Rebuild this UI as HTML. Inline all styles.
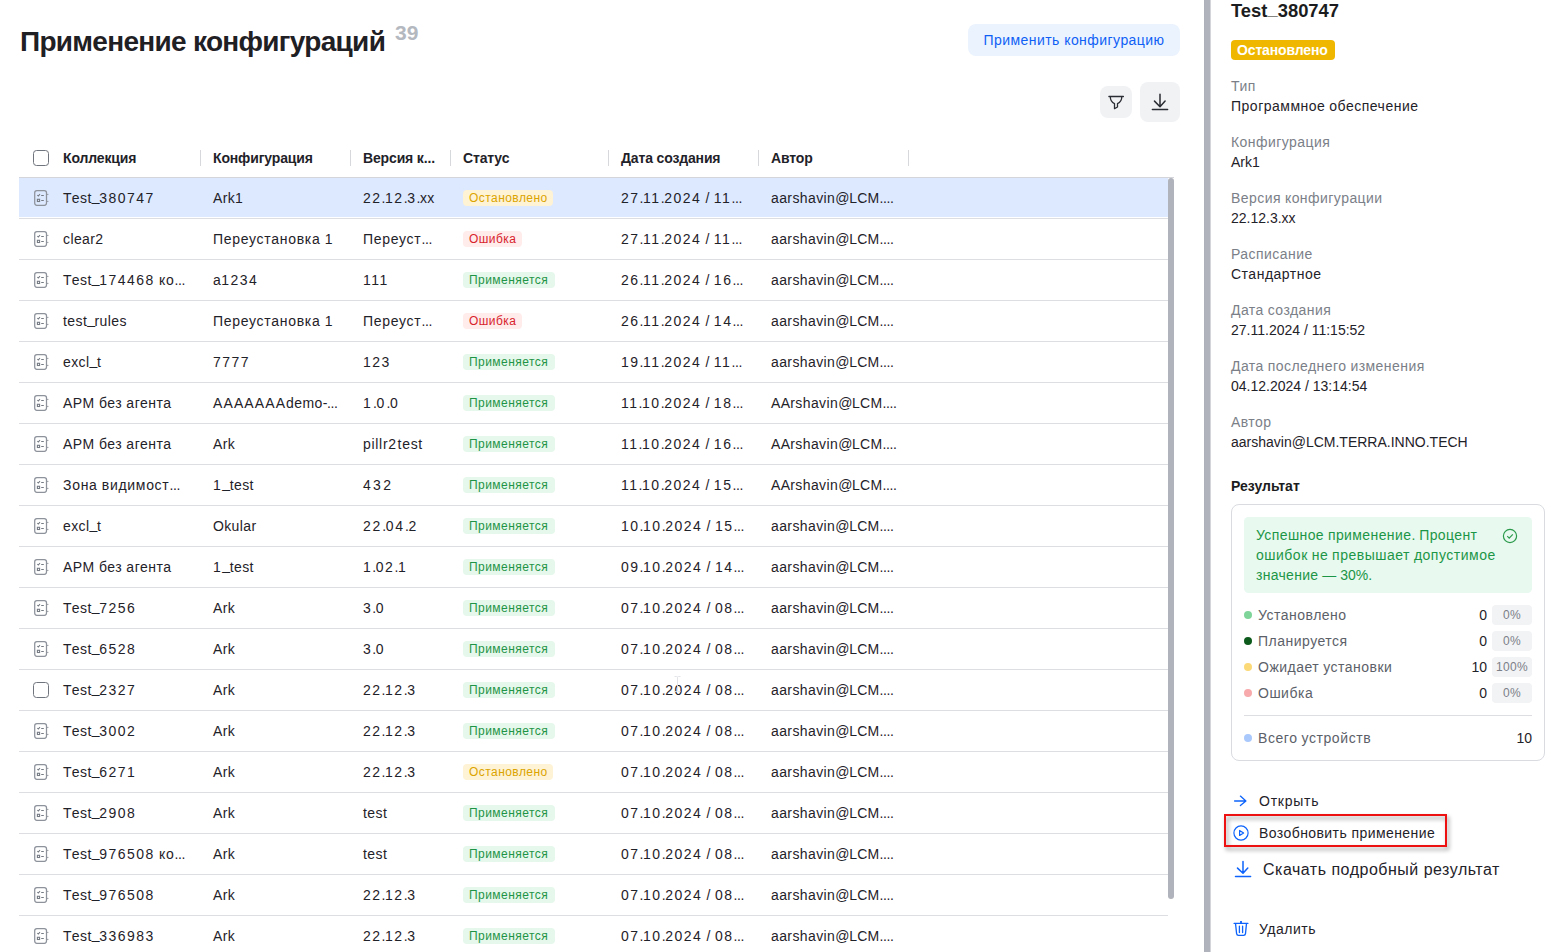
<!DOCTYPE html><html><head><meta charset="utf-8"><style>
*{box-sizing:border-box;margin:0;padding:0}
html,body{width:1558px;height:952px;overflow:hidden;background:#fff}
body{font-family:"Liberation Sans",sans-serif;color:#1f2229;position:relative}
.abs{position:absolute;white-space:nowrap}
.title{left:20px;top:24px;font-size:28px;font-weight:700;letter-spacing:-0.7px;line-height:36px;color:#1f2024}
.count{left:395px;top:22px;font-size:21px;font-weight:700;color:#b4b8bf;line-height:22px}
.btn-apply{left:968px;top:24px;width:212px;height:32px;border-radius:8px;background:#ebf3fe;color:#0f5ff5;font-size:14px;line-height:32px;text-align:center;letter-spacing:0.45px}
.ibtn{background:#f1f2f4;border-radius:8px}
.th{font-size:14px;font-weight:700;line-height:20px;top:148px;color:#1f2229;letter-spacing:-0.15px}
.sep{width:1px;height:16px;top:150px;background:#d6d8dc}
.hline{left:19px;top:177px;width:1155px;height:1px;background:#d3d5da}
.row{position:absolute;left:19px;width:1149px;height:41px}
.row .bg{position:absolute;left:0;top:0;width:1149px;height:39px;background:#dde9fe}
.row .ln{position:absolute;left:0;top:40px;width:1149px;height:1px;background:#dcdee2}
.cell{position:absolute;top:10px;font-size:14px;line-height:20px;white-space:nowrap;color:#1f2229}
.ricon{position:absolute;left:14px;top:11px}
.cb{position:absolute;left:14px;top:12px;width:16px;height:16px;border:1.3px solid #70747c;border-radius:3.5px;background:#fff}
.badge{position:absolute;left:444px;top:12px;height:16px;border-radius:4px;font-size:12px;line-height:16px;padding:0 6px;letter-spacing:0.45px;white-space:nowrap}
.st-stop{background:#fff3d5;color:#dba400;width:90px}
.st-err{background:#ffeceb;color:#d8232c;width:59px}
.st-ok{background:#e5f8eb;color:#1f9447;width:92px}
.scroll{left:1168px;top:178px;width:6px;height:721px;border-radius:3px;background:#b0b3bb}
.divider{left:1204px;top:0;width:7px;height:952px;background:linear-gradient(to right,#abaeb6 0,#b0b3bb 1px,#b0b3bb 6px,#d3d5da 6px)}
.rp-title{left:1231px;top:0px;font-size:18.4px;font-weight:700;line-height:22px;color:#1b1c20}
.rp-badge{left:1231px;top:40px;width:104px;height:20px;border-radius:4px;background:#f0b700;color:#fff;font-size:14px;font-weight:700;line-height:20px;padding-left:6px;letter-spacing:-0.15px}
.lbl{left:1231px;font-size:14px;line-height:20px;color:#7b8088}
.val{left:1231px;font-size:14px;line-height:20px;color:#1f2229}
.card{left:1231px;top:504px;width:314px;height:257px;border:1px solid #d9dbe0;border-radius:8px}
.green{left:1244px;top:517px;width:288px;height:76px;border-radius:4.5px;background:#e8f9f0}
.gtext{left:1256px;top:525px;font-size:14px;line-height:20px;color:#1c9646}
.dot{width:8px;height:8px;border-radius:50%}
.leg{left:1258px;font-size:14px;line-height:20px;color:#5c6169}
.num{font-size:14px;line-height:20px;color:#1f2229;text-align:right}
.pill{left:1492px;width:40px;height:20px;border-radius:4px;background:#f2f3f5;color:#7b8088;font-size:12px;line-height:20px;text-align:center;letter-spacing:0.3px}
.act{font-size:14px;line-height:20px;color:#1f2229}
.redbox{left:1224px;top:814px;width:223px;height:33px;border:2px solid #ee1111;filter:drop-shadow(2px 3px 2px rgba(0,0,0,0.4))}
</style></head><body>
<div class="abs title">Применение конфигураций</div>
<div class="abs count">39</div>
<div class="abs btn-apply">Применить конфигурацию</div>
<div class="abs ibtn" style="left:1100px;top:86px;width:32px;height:32px"><svg width="32" height="32" viewBox="0 0 32 32" style="position:absolute;left:0;top:0"><path d="M8.9 10.5h14.5M10.3 10.7C10.3 14.5 12 16.4 14.5 17.6V22.7L17.5 21V17.6C20 16.4 21.8 14.5 21.8 10.7" fill="none" stroke="#2a2d33" stroke-width="1.3" stroke-linecap="round" stroke-linejoin="round"/></svg></div>
<div class="abs ibtn" style="left:1140px;top:82px;width:40px;height:40px"><svg width="40" height="40" viewBox="0 0 40 40" style="position:absolute;left:0;top:0"><path d="M20 12.3v12.2M14.5 19.1l5.5 5.6 5.1-5.6M12.4 27.4h15.2" fill="none" stroke="#2a2d33" stroke-width="1.5" stroke-linecap="round" stroke-linejoin="round"/></svg></div>
<div class="abs cb" style="left:33px;top:150px"></div>
<div class="abs th" style="left:63px">Коллекция</div>
<div class="abs th" style="left:213px">Конфигурация</div>
<div class="abs th" style="left:363px">Версия к...</div>
<div class="abs th" style="left:463px">Статус</div>
<div class="abs th" style="left:621px">Дата создания</div>
<div class="abs th" style="left:771px">Автор</div>
<div class="abs sep" style="left:200px"></div>
<div class="abs sep" style="left:350px"></div>
<div class="abs sep" style="left:450px"></div>
<div class="abs sep" style="left:608px"></div>
<div class="abs sep" style="left:758px"></div>
<div class="abs sep" style="left:908px"></div>
<div class="abs hline"></div>
<div class="row" style="top:178px">
<div class="bg"></div>
<div class="ln"></div>
<svg class="ricon" width="17" height="18" viewBox="0 0 17 18"><rect x="1.7" y="1.65" width="11.8" height="14.6" rx="2.2" fill="none" stroke="#8d929b" stroke-width="1.25"/><path d="M14.1 5.4h1.3M14.1 12.4h1.3" stroke="#8d929b" stroke-width="1"/><path d="M4.3 6l1 1 1.7-1.9M8.2 6.4h2.6M8.2 11.5h2.6" fill="none" stroke="#757a83" stroke-width="1.05"/><rect x="4.4" y="10.3" width="2.2" height="2.2" fill="none" stroke="#757a83" stroke-width="1.1"/></svg>
<div class="cell" style="left:44px"><span style="letter-spacing:0.3px">T</span><span style="letter-spacing:0.4px">est</span><span style="letter-spacing:-0.4px"><span style="position:relative;top:-2px">_</span></span><span style="letter-spacing:1.5px">380747</span></div>
<div class="cell" style="left:194px"><span style="letter-spacing:0.3px">A</span><span style="letter-spacing:0.4px">rk</span><span style="letter-spacing:1.5px">1</span></div>
<div class="cell" style="left:344px"><span style="letter-spacing:1.5px">22</span><span style="letter-spacing:-0.4px">.</span><span style="letter-spacing:1.5px">12</span><span style="letter-spacing:-0.4px">.</span><span style="letter-spacing:1.5px">3</span><span style="letter-spacing:-0.4px">.</span><span style="letter-spacing:0.4px">xx</span></div>
<div class="cell" style="left:602px"><span style="letter-spacing:1.5px">27</span><span style="letter-spacing:-0.4px">.</span><span style="letter-spacing:1.5px">11</span><span style="letter-spacing:-0.4px">.</span><span style="letter-spacing:1.5px">2024</span><span style="letter-spacing:0.3px"> / </span><span style="letter-spacing:1.5px">11</span><span style="letter-spacing:-0.4px">...</span></div>
<div class="cell" style="left:752px"><span style="letter-spacing:0.4px">aarshavin</span><span style="letter-spacing:-0.4px">@</span><span style="letter-spacing:0.3px">LCM</span><span style="letter-spacing:-0.4px">....</span></div>
<div class="badge st-stop">Остановлено</div>
</div>
<div class="row" style="top:219px">
<div class="ln"></div>
<svg class="ricon" width="17" height="18" viewBox="0 0 17 18"><rect x="1.7" y="1.65" width="11.8" height="14.6" rx="2.2" fill="none" stroke="#8d929b" stroke-width="1.25"/><path d="M14.1 5.4h1.3M14.1 12.4h1.3" stroke="#8d929b" stroke-width="1"/><path d="M4.3 6l1 1 1.7-1.9M8.2 6.4h2.6M8.2 11.5h2.6" fill="none" stroke="#757a83" stroke-width="1.05"/><rect x="4.4" y="10.3" width="2.2" height="2.2" fill="none" stroke="#757a83" stroke-width="1.1"/></svg>
<div class="cell" style="left:44px"><span style="letter-spacing:0.4px">clear</span><span style="letter-spacing:1.5px">2</span></div>
<div class="cell" style="left:194px"><span style="letter-spacing:0.7px">Переустановка</span><span style="letter-spacing:0.3px"> </span><span style="letter-spacing:1.5px">1</span></div>
<div class="cell" style="left:344px"><span style="letter-spacing:0.7px">Переуст</span><span style="letter-spacing:-0.4px">...</span></div>
<div class="cell" style="left:602px"><span style="letter-spacing:1.5px">27</span><span style="letter-spacing:-0.4px">.</span><span style="letter-spacing:1.5px">11</span><span style="letter-spacing:-0.4px">.</span><span style="letter-spacing:1.5px">2024</span><span style="letter-spacing:0.3px"> / </span><span style="letter-spacing:1.5px">11</span><span style="letter-spacing:-0.4px">...</span></div>
<div class="cell" style="left:752px"><span style="letter-spacing:0.4px">aarshavin</span><span style="letter-spacing:-0.4px">@</span><span style="letter-spacing:0.3px">LCM</span><span style="letter-spacing:-0.4px">....</span></div>
<div class="badge st-err">Ошибка</div>
</div>
<div class="row" style="top:260px">
<div class="ln"></div>
<svg class="ricon" width="17" height="18" viewBox="0 0 17 18"><rect x="1.7" y="1.65" width="11.8" height="14.6" rx="2.2" fill="none" stroke="#8d929b" stroke-width="1.25"/><path d="M14.1 5.4h1.3M14.1 12.4h1.3" stroke="#8d929b" stroke-width="1"/><path d="M4.3 6l1 1 1.7-1.9M8.2 6.4h2.6M8.2 11.5h2.6" fill="none" stroke="#757a83" stroke-width="1.05"/><rect x="4.4" y="10.3" width="2.2" height="2.2" fill="none" stroke="#757a83" stroke-width="1.1"/></svg>
<div class="cell" style="left:44px"><span style="letter-spacing:0.3px">T</span><span style="letter-spacing:0.4px">est</span><span style="letter-spacing:-0.4px"><span style="position:relative;top:-2px">_</span></span><span style="letter-spacing:1.5px">174468</span><span style="letter-spacing:0.3px"> </span><span style="letter-spacing:0.7px">ко</span><span style="letter-spacing:-0.4px">...</span></div>
<div class="cell" style="left:194px"><span style="letter-spacing:0.4px">a</span><span style="letter-spacing:1.5px">1234</span></div>
<div class="cell" style="left:344px"><span style="letter-spacing:1.5px">111</span></div>
<div class="cell" style="left:602px"><span style="letter-spacing:1.5px">26</span><span style="letter-spacing:-0.4px">.</span><span style="letter-spacing:1.5px">11</span><span style="letter-spacing:-0.4px">.</span><span style="letter-spacing:1.5px">2024</span><span style="letter-spacing:0.3px"> / </span><span style="letter-spacing:1.5px">16</span><span style="letter-spacing:-0.4px">...</span></div>
<div class="cell" style="left:752px"><span style="letter-spacing:0.4px">aarshavin</span><span style="letter-spacing:-0.4px">@</span><span style="letter-spacing:0.3px">LCM</span><span style="letter-spacing:-0.4px">....</span></div>
<div class="badge st-ok">Применяется</div>
</div>
<div class="row" style="top:301px">
<div class="ln"></div>
<svg class="ricon" width="17" height="18" viewBox="0 0 17 18"><rect x="1.7" y="1.65" width="11.8" height="14.6" rx="2.2" fill="none" stroke="#8d929b" stroke-width="1.25"/><path d="M14.1 5.4h1.3M14.1 12.4h1.3" stroke="#8d929b" stroke-width="1"/><path d="M4.3 6l1 1 1.7-1.9M8.2 6.4h2.6M8.2 11.5h2.6" fill="none" stroke="#757a83" stroke-width="1.05"/><rect x="4.4" y="10.3" width="2.2" height="2.2" fill="none" stroke="#757a83" stroke-width="1.1"/></svg>
<div class="cell" style="left:44px"><span style="letter-spacing:0.4px">test</span><span style="letter-spacing:-0.4px"><span style="position:relative;top:-2px">_</span></span><span style="letter-spacing:0.4px">rules</span></div>
<div class="cell" style="left:194px"><span style="letter-spacing:0.7px">Переустановка</span><span style="letter-spacing:0.3px"> </span><span style="letter-spacing:1.5px">1</span></div>
<div class="cell" style="left:344px"><span style="letter-spacing:0.7px">Переуст</span><span style="letter-spacing:-0.4px">...</span></div>
<div class="cell" style="left:602px"><span style="letter-spacing:1.5px">26</span><span style="letter-spacing:-0.4px">.</span><span style="letter-spacing:1.5px">11</span><span style="letter-spacing:-0.4px">.</span><span style="letter-spacing:1.5px">2024</span><span style="letter-spacing:0.3px"> / </span><span style="letter-spacing:1.5px">14</span><span style="letter-spacing:-0.4px">...</span></div>
<div class="cell" style="left:752px"><span style="letter-spacing:0.4px">aarshavin</span><span style="letter-spacing:-0.4px">@</span><span style="letter-spacing:0.3px">LCM</span><span style="letter-spacing:-0.4px">....</span></div>
<div class="badge st-err">Ошибка</div>
</div>
<div class="row" style="top:342px">
<div class="ln"></div>
<svg class="ricon" width="17" height="18" viewBox="0 0 17 18"><rect x="1.7" y="1.65" width="11.8" height="14.6" rx="2.2" fill="none" stroke="#8d929b" stroke-width="1.25"/><path d="M14.1 5.4h1.3M14.1 12.4h1.3" stroke="#8d929b" stroke-width="1"/><path d="M4.3 6l1 1 1.7-1.9M8.2 6.4h2.6M8.2 11.5h2.6" fill="none" stroke="#757a83" stroke-width="1.05"/><rect x="4.4" y="10.3" width="2.2" height="2.2" fill="none" stroke="#757a83" stroke-width="1.1"/></svg>
<div class="cell" style="left:44px"><span style="letter-spacing:0.4px">excl</span><span style="letter-spacing:-0.4px"><span style="position:relative;top:-2px">_</span></span><span style="letter-spacing:0.4px">t</span></div>
<div class="cell" style="left:194px"><span style="letter-spacing:1.5px">7777</span></div>
<div class="cell" style="left:344px"><span style="letter-spacing:1.5px">123</span></div>
<div class="cell" style="left:602px"><span style="letter-spacing:1.5px">19</span><span style="letter-spacing:-0.4px">.</span><span style="letter-spacing:1.5px">11</span><span style="letter-spacing:-0.4px">.</span><span style="letter-spacing:1.5px">2024</span><span style="letter-spacing:0.3px"> / </span><span style="letter-spacing:1.5px">11</span><span style="letter-spacing:-0.4px">...</span></div>
<div class="cell" style="left:752px"><span style="letter-spacing:0.4px">aarshavin</span><span style="letter-spacing:-0.4px">@</span><span style="letter-spacing:0.3px">LCM</span><span style="letter-spacing:-0.4px">....</span></div>
<div class="badge st-ok">Применяется</div>
</div>
<div class="row" style="top:383px">
<div class="ln"></div>
<svg class="ricon" width="17" height="18" viewBox="0 0 17 18"><rect x="1.7" y="1.65" width="11.8" height="14.6" rx="2.2" fill="none" stroke="#8d929b" stroke-width="1.25"/><path d="M14.1 5.4h1.3M14.1 12.4h1.3" stroke="#8d929b" stroke-width="1"/><path d="M4.3 6l1 1 1.7-1.9M8.2 6.4h2.6M8.2 11.5h2.6" fill="none" stroke="#757a83" stroke-width="1.05"/><rect x="4.4" y="10.3" width="2.2" height="2.2" fill="none" stroke="#757a83" stroke-width="1.1"/></svg>
<div class="cell" style="left:44px"><span style="letter-spacing:0.5px">АРМ</span><span style="letter-spacing:0.3px"> </span><span style="letter-spacing:0.5px">без</span><span style="letter-spacing:0.3px"> </span><span style="letter-spacing:0.5px">агента</span></div>
<div class="cell" style="left:194px"><span style="letter-spacing:1.1px">AAAAAAA</span><span style="letter-spacing:0.4px">demo</span><span style="letter-spacing:-0.4px">-...</span></div>
<div class="cell" style="left:344px"><span style="letter-spacing:2.2px">1</span><span style="letter-spacing:-0.4px">.</span><span style="letter-spacing:2.2px">0</span><span style="letter-spacing:-0.4px">.</span><span style="letter-spacing:2.2px">0</span></div>
<div class="cell" style="left:602px"><span style="letter-spacing:1.5px">11</span><span style="letter-spacing:-0.4px">.</span><span style="letter-spacing:1.5px">10</span><span style="letter-spacing:-0.4px">.</span><span style="letter-spacing:1.5px">2024</span><span style="letter-spacing:0.3px"> / </span><span style="letter-spacing:1.5px">18</span><span style="letter-spacing:-0.4px">...</span></div>
<div class="cell" style="left:752px"><span style="letter-spacing:0.3px">AA</span><span style="letter-spacing:0.4px">rshavin</span><span style="letter-spacing:-0.4px">@</span><span style="letter-spacing:0.3px">LCM</span><span style="letter-spacing:-0.4px">....</span></div>
<div class="badge st-ok">Применяется</div>
</div>
<div class="row" style="top:424px">
<div class="ln"></div>
<svg class="ricon" width="17" height="18" viewBox="0 0 17 18"><rect x="1.7" y="1.65" width="11.8" height="14.6" rx="2.2" fill="none" stroke="#8d929b" stroke-width="1.25"/><path d="M14.1 5.4h1.3M14.1 12.4h1.3" stroke="#8d929b" stroke-width="1"/><path d="M4.3 6l1 1 1.7-1.9M8.2 6.4h2.6M8.2 11.5h2.6" fill="none" stroke="#757a83" stroke-width="1.05"/><rect x="4.4" y="10.3" width="2.2" height="2.2" fill="none" stroke="#757a83" stroke-width="1.1"/></svg>
<div class="cell" style="left:44px"><span style="letter-spacing:0.5px">АРМ</span><span style="letter-spacing:0.3px"> </span><span style="letter-spacing:0.5px">без</span><span style="letter-spacing:0.3px"> </span><span style="letter-spacing:0.5px">агента</span></div>
<div class="cell" style="left:194px"><span style="letter-spacing:0.3px">A</span><span style="letter-spacing:0.4px">rk</span></div>
<div class="cell" style="left:344px"><span style="letter-spacing:0.7px">pillr</span><span style="letter-spacing:1.5px">2</span><span style="letter-spacing:0.7px">test</span></div>
<div class="cell" style="left:602px"><span style="letter-spacing:1.5px">11</span><span style="letter-spacing:-0.4px">.</span><span style="letter-spacing:1.5px">10</span><span style="letter-spacing:-0.4px">.</span><span style="letter-spacing:1.5px">2024</span><span style="letter-spacing:0.3px"> / </span><span style="letter-spacing:1.5px">16</span><span style="letter-spacing:-0.4px">...</span></div>
<div class="cell" style="left:752px"><span style="letter-spacing:0.3px">AA</span><span style="letter-spacing:0.4px">rshavin</span><span style="letter-spacing:-0.4px">@</span><span style="letter-spacing:0.3px">LCM</span><span style="letter-spacing:-0.4px">....</span></div>
<div class="badge st-ok">Применяется</div>
</div>
<div class="row" style="top:465px">
<div class="ln"></div>
<svg class="ricon" width="17" height="18" viewBox="0 0 17 18"><rect x="1.7" y="1.65" width="11.8" height="14.6" rx="2.2" fill="none" stroke="#8d929b" stroke-width="1.25"/><path d="M14.1 5.4h1.3M14.1 12.4h1.3" stroke="#8d929b" stroke-width="1"/><path d="M4.3 6l1 1 1.7-1.9M8.2 6.4h2.6M8.2 11.5h2.6" fill="none" stroke="#757a83" stroke-width="1.05"/><rect x="4.4" y="10.3" width="2.2" height="2.2" fill="none" stroke="#757a83" stroke-width="1.1"/></svg>
<div class="cell" style="left:44px"><span style="letter-spacing:0.7px">Зона</span><span style="letter-spacing:0.3px"> </span><span style="letter-spacing:0.7px">видимост</span><span style="letter-spacing:-0.4px">...</span></div>
<div class="cell" style="left:194px"><span style="letter-spacing:1.5px">1</span><span style="letter-spacing:-0.4px"><span style="position:relative;top:-2px">_</span></span><span style="letter-spacing:0.4px">test</span></div>
<div class="cell" style="left:344px"><span style="letter-spacing:2.3px">432</span></div>
<div class="cell" style="left:602px"><span style="letter-spacing:1.5px">11</span><span style="letter-spacing:-0.4px">.</span><span style="letter-spacing:1.5px">10</span><span style="letter-spacing:-0.4px">.</span><span style="letter-spacing:1.5px">2024</span><span style="letter-spacing:0.3px"> / </span><span style="letter-spacing:1.5px">15</span><span style="letter-spacing:-0.4px">...</span></div>
<div class="cell" style="left:752px"><span style="letter-spacing:0.3px">AA</span><span style="letter-spacing:0.4px">rshavin</span><span style="letter-spacing:-0.4px">@</span><span style="letter-spacing:0.3px">LCM</span><span style="letter-spacing:-0.4px">....</span></div>
<div class="badge st-ok">Применяется</div>
</div>
<div class="row" style="top:506px">
<div class="ln"></div>
<svg class="ricon" width="17" height="18" viewBox="0 0 17 18"><rect x="1.7" y="1.65" width="11.8" height="14.6" rx="2.2" fill="none" stroke="#8d929b" stroke-width="1.25"/><path d="M14.1 5.4h1.3M14.1 12.4h1.3" stroke="#8d929b" stroke-width="1"/><path d="M4.3 6l1 1 1.7-1.9M8.2 6.4h2.6M8.2 11.5h2.6" fill="none" stroke="#757a83" stroke-width="1.05"/><rect x="4.4" y="10.3" width="2.2" height="2.2" fill="none" stroke="#757a83" stroke-width="1.1"/></svg>
<div class="cell" style="left:44px"><span style="letter-spacing:0.4px">excl</span><span style="letter-spacing:-0.4px"><span style="position:relative;top:-2px">_</span></span><span style="letter-spacing:0.4px">t</span></div>
<div class="cell" style="left:194px"><span style="letter-spacing:0.3px">O</span><span style="letter-spacing:0.4px">kular</span></div>
<div class="cell" style="left:344px"><span style="letter-spacing:1.8px">22</span><span style="letter-spacing:-0.4px">.</span><span style="letter-spacing:1.8px">04</span><span style="letter-spacing:-0.4px">.</span><span style="letter-spacing:1.8px">2</span></div>
<div class="cell" style="left:602px"><span style="letter-spacing:1.5px">10</span><span style="letter-spacing:-0.4px">.</span><span style="letter-spacing:1.5px">10</span><span style="letter-spacing:-0.4px">.</span><span style="letter-spacing:1.5px">2024</span><span style="letter-spacing:0.3px"> / </span><span style="letter-spacing:1.5px">15</span><span style="letter-spacing:-0.4px">...</span></div>
<div class="cell" style="left:752px"><span style="letter-spacing:0.4px">aarshavin</span><span style="letter-spacing:-0.4px">@</span><span style="letter-spacing:0.3px">LCM</span><span style="letter-spacing:-0.4px">....</span></div>
<div class="badge st-ok">Применяется</div>
</div>
<div class="row" style="top:547px">
<div class="ln"></div>
<svg class="ricon" width="17" height="18" viewBox="0 0 17 18"><rect x="1.7" y="1.65" width="11.8" height="14.6" rx="2.2" fill="none" stroke="#8d929b" stroke-width="1.25"/><path d="M14.1 5.4h1.3M14.1 12.4h1.3" stroke="#8d929b" stroke-width="1"/><path d="M4.3 6l1 1 1.7-1.9M8.2 6.4h2.6M8.2 11.5h2.6" fill="none" stroke="#757a83" stroke-width="1.05"/><rect x="4.4" y="10.3" width="2.2" height="2.2" fill="none" stroke="#757a83" stroke-width="1.1"/></svg>
<div class="cell" style="left:44px"><span style="letter-spacing:0.5px">АРМ</span><span style="letter-spacing:0.3px"> </span><span style="letter-spacing:0.5px">без</span><span style="letter-spacing:0.3px"> </span><span style="letter-spacing:0.5px">агента</span></div>
<div class="cell" style="left:194px"><span style="letter-spacing:1.5px">1</span><span style="letter-spacing:-0.4px"><span style="position:relative;top:-2px">_</span></span><span style="letter-spacing:0.4px">test</span></div>
<div class="cell" style="left:344px"><span style="letter-spacing:1.5px">1</span><span style="letter-spacing:-0.4px">.</span><span style="letter-spacing:1.5px">02</span><span style="letter-spacing:-0.4px">.</span><span style="letter-spacing:1.5px">1</span></div>
<div class="cell" style="left:602px"><span style="letter-spacing:1.5px">09</span><span style="letter-spacing:-0.4px">.</span><span style="letter-spacing:1.5px">10</span><span style="letter-spacing:-0.4px">.</span><span style="letter-spacing:1.5px">2024</span><span style="letter-spacing:0.3px"> / </span><span style="letter-spacing:1.5px">14</span><span style="letter-spacing:-0.4px">...</span></div>
<div class="cell" style="left:752px"><span style="letter-spacing:0.4px">aarshavin</span><span style="letter-spacing:-0.4px">@</span><span style="letter-spacing:0.3px">LCM</span><span style="letter-spacing:-0.4px">....</span></div>
<div class="badge st-ok">Применяется</div>
</div>
<div class="row" style="top:588px">
<div class="ln"></div>
<svg class="ricon" width="17" height="18" viewBox="0 0 17 18"><rect x="1.7" y="1.65" width="11.8" height="14.6" rx="2.2" fill="none" stroke="#8d929b" stroke-width="1.25"/><path d="M14.1 5.4h1.3M14.1 12.4h1.3" stroke="#8d929b" stroke-width="1"/><path d="M4.3 6l1 1 1.7-1.9M8.2 6.4h2.6M8.2 11.5h2.6" fill="none" stroke="#757a83" stroke-width="1.05"/><rect x="4.4" y="10.3" width="2.2" height="2.2" fill="none" stroke="#757a83" stroke-width="1.1"/></svg>
<div class="cell" style="left:44px"><span style="letter-spacing:0.3px">T</span><span style="letter-spacing:0.4px">est</span><span style="letter-spacing:-0.4px"><span style="position:relative;top:-2px">_</span></span><span style="letter-spacing:1.5px">7256</span></div>
<div class="cell" style="left:194px"><span style="letter-spacing:0.3px">A</span><span style="letter-spacing:0.4px">rk</span></div>
<div class="cell" style="left:344px"><span style="letter-spacing:1.5px">3</span><span style="letter-spacing:-0.4px">.</span><span style="letter-spacing:1.5px">0</span></div>
<div class="cell" style="left:602px"><span style="letter-spacing:1.5px">07</span><span style="letter-spacing:-0.4px">.</span><span style="letter-spacing:1.5px">10</span><span style="letter-spacing:-0.4px">.</span><span style="letter-spacing:1.5px">2024</span><span style="letter-spacing:0.3px"> / </span><span style="letter-spacing:1.5px">08</span><span style="letter-spacing:-0.4px">...</span></div>
<div class="cell" style="left:752px"><span style="letter-spacing:0.4px">aarshavin</span><span style="letter-spacing:-0.4px">@</span><span style="letter-spacing:0.3px">LCM</span><span style="letter-spacing:-0.4px">....</span></div>
<div class="badge st-ok">Применяется</div>
</div>
<div class="row" style="top:629px">
<div class="ln"></div>
<svg class="ricon" width="17" height="18" viewBox="0 0 17 18"><rect x="1.7" y="1.65" width="11.8" height="14.6" rx="2.2" fill="none" stroke="#8d929b" stroke-width="1.25"/><path d="M14.1 5.4h1.3M14.1 12.4h1.3" stroke="#8d929b" stroke-width="1"/><path d="M4.3 6l1 1 1.7-1.9M8.2 6.4h2.6M8.2 11.5h2.6" fill="none" stroke="#757a83" stroke-width="1.05"/><rect x="4.4" y="10.3" width="2.2" height="2.2" fill="none" stroke="#757a83" stroke-width="1.1"/></svg>
<div class="cell" style="left:44px"><span style="letter-spacing:0.3px">T</span><span style="letter-spacing:0.4px">est</span><span style="letter-spacing:-0.4px"><span style="position:relative;top:-2px">_</span></span><span style="letter-spacing:1.5px">6528</span></div>
<div class="cell" style="left:194px"><span style="letter-spacing:0.3px">A</span><span style="letter-spacing:0.4px">rk</span></div>
<div class="cell" style="left:344px"><span style="letter-spacing:1.5px">3</span><span style="letter-spacing:-0.4px">.</span><span style="letter-spacing:1.5px">0</span></div>
<div class="cell" style="left:602px"><span style="letter-spacing:1.5px">07</span><span style="letter-spacing:-0.4px">.</span><span style="letter-spacing:1.5px">10</span><span style="letter-spacing:-0.4px">.</span><span style="letter-spacing:1.5px">2024</span><span style="letter-spacing:0.3px"> / </span><span style="letter-spacing:1.5px">08</span><span style="letter-spacing:-0.4px">...</span></div>
<div class="cell" style="left:752px"><span style="letter-spacing:0.4px">aarshavin</span><span style="letter-spacing:-0.4px">@</span><span style="letter-spacing:0.3px">LCM</span><span style="letter-spacing:-0.4px">....</span></div>
<div class="badge st-ok">Применяется</div>
</div>
<div class="row" style="top:670px">
<div class="ln"></div>
<div class="cb"></div>
<div class="cell" style="left:44px"><span style="letter-spacing:0.3px">T</span><span style="letter-spacing:0.4px">est</span><span style="letter-spacing:-0.4px"><span style="position:relative;top:-2px">_</span></span><span style="letter-spacing:1.5px">2327</span></div>
<div class="cell" style="left:194px"><span style="letter-spacing:0.3px">A</span><span style="letter-spacing:0.4px">rk</span></div>
<div class="cell" style="left:344px"><span style="letter-spacing:1.5px">22</span><span style="letter-spacing:-0.4px">.</span><span style="letter-spacing:1.5px">12</span><span style="letter-spacing:-0.4px">.</span><span style="letter-spacing:1.5px">3</span></div>
<div class="cell" style="left:602px"><span style="letter-spacing:1.5px">07</span><span style="letter-spacing:-0.4px">.</span><span style="letter-spacing:1.5px">10</span><span style="letter-spacing:-0.4px">.</span><span style="letter-spacing:1.5px">2024</span><span style="letter-spacing:0.3px"> / </span><span style="letter-spacing:1.5px">08</span><span style="letter-spacing:-0.4px">...</span></div>
<div class="cell" style="left:752px"><span style="letter-spacing:0.4px">aarshavin</span><span style="letter-spacing:-0.4px">@</span><span style="letter-spacing:0.3px">LCM</span><span style="letter-spacing:-0.4px">....</span></div>
<div class="badge st-ok">Применяется</div>
</div>
<div class="row" style="top:711px">
<div class="ln"></div>
<svg class="ricon" width="17" height="18" viewBox="0 0 17 18"><rect x="1.7" y="1.65" width="11.8" height="14.6" rx="2.2" fill="none" stroke="#8d929b" stroke-width="1.25"/><path d="M14.1 5.4h1.3M14.1 12.4h1.3" stroke="#8d929b" stroke-width="1"/><path d="M4.3 6l1 1 1.7-1.9M8.2 6.4h2.6M8.2 11.5h2.6" fill="none" stroke="#757a83" stroke-width="1.05"/><rect x="4.4" y="10.3" width="2.2" height="2.2" fill="none" stroke="#757a83" stroke-width="1.1"/></svg>
<div class="cell" style="left:44px"><span style="letter-spacing:0.3px">T</span><span style="letter-spacing:0.4px">est</span><span style="letter-spacing:-0.4px"><span style="position:relative;top:-2px">_</span></span><span style="letter-spacing:1.5px">3002</span></div>
<div class="cell" style="left:194px"><span style="letter-spacing:0.3px">A</span><span style="letter-spacing:0.4px">rk</span></div>
<div class="cell" style="left:344px"><span style="letter-spacing:1.5px">22</span><span style="letter-spacing:-0.4px">.</span><span style="letter-spacing:1.5px">12</span><span style="letter-spacing:-0.4px">.</span><span style="letter-spacing:1.5px">3</span></div>
<div class="cell" style="left:602px"><span style="letter-spacing:1.5px">07</span><span style="letter-spacing:-0.4px">.</span><span style="letter-spacing:1.5px">10</span><span style="letter-spacing:-0.4px">.</span><span style="letter-spacing:1.5px">2024</span><span style="letter-spacing:0.3px"> / </span><span style="letter-spacing:1.5px">08</span><span style="letter-spacing:-0.4px">...</span></div>
<div class="cell" style="left:752px"><span style="letter-spacing:0.4px">aarshavin</span><span style="letter-spacing:-0.4px">@</span><span style="letter-spacing:0.3px">LCM</span><span style="letter-spacing:-0.4px">....</span></div>
<div class="badge st-ok">Применяется</div>
</div>
<div class="row" style="top:752px">
<div class="ln"></div>
<svg class="ricon" width="17" height="18" viewBox="0 0 17 18"><rect x="1.7" y="1.65" width="11.8" height="14.6" rx="2.2" fill="none" stroke="#8d929b" stroke-width="1.25"/><path d="M14.1 5.4h1.3M14.1 12.4h1.3" stroke="#8d929b" stroke-width="1"/><path d="M4.3 6l1 1 1.7-1.9M8.2 6.4h2.6M8.2 11.5h2.6" fill="none" stroke="#757a83" stroke-width="1.05"/><rect x="4.4" y="10.3" width="2.2" height="2.2" fill="none" stroke="#757a83" stroke-width="1.1"/></svg>
<div class="cell" style="left:44px"><span style="letter-spacing:0.3px">T</span><span style="letter-spacing:0.4px">est</span><span style="letter-spacing:-0.4px"><span style="position:relative;top:-2px">_</span></span><span style="letter-spacing:1.5px">6271</span></div>
<div class="cell" style="left:194px"><span style="letter-spacing:0.3px">A</span><span style="letter-spacing:0.4px">rk</span></div>
<div class="cell" style="left:344px"><span style="letter-spacing:1.5px">22</span><span style="letter-spacing:-0.4px">.</span><span style="letter-spacing:1.5px">12</span><span style="letter-spacing:-0.4px">.</span><span style="letter-spacing:1.5px">3</span></div>
<div class="cell" style="left:602px"><span style="letter-spacing:1.5px">07</span><span style="letter-spacing:-0.4px">.</span><span style="letter-spacing:1.5px">10</span><span style="letter-spacing:-0.4px">.</span><span style="letter-spacing:1.5px">2024</span><span style="letter-spacing:0.3px"> / </span><span style="letter-spacing:1.5px">08</span><span style="letter-spacing:-0.4px">...</span></div>
<div class="cell" style="left:752px"><span style="letter-spacing:0.4px">aarshavin</span><span style="letter-spacing:-0.4px">@</span><span style="letter-spacing:0.3px">LCM</span><span style="letter-spacing:-0.4px">....</span></div>
<div class="badge st-stop">Остановлено</div>
</div>
<div class="row" style="top:793px">
<div class="ln"></div>
<svg class="ricon" width="17" height="18" viewBox="0 0 17 18"><rect x="1.7" y="1.65" width="11.8" height="14.6" rx="2.2" fill="none" stroke="#8d929b" stroke-width="1.25"/><path d="M14.1 5.4h1.3M14.1 12.4h1.3" stroke="#8d929b" stroke-width="1"/><path d="M4.3 6l1 1 1.7-1.9M8.2 6.4h2.6M8.2 11.5h2.6" fill="none" stroke="#757a83" stroke-width="1.05"/><rect x="4.4" y="10.3" width="2.2" height="2.2" fill="none" stroke="#757a83" stroke-width="1.1"/></svg>
<div class="cell" style="left:44px"><span style="letter-spacing:0.3px">T</span><span style="letter-spacing:0.4px">est</span><span style="letter-spacing:-0.4px"><span style="position:relative;top:-2px">_</span></span><span style="letter-spacing:1.5px">2908</span></div>
<div class="cell" style="left:194px"><span style="letter-spacing:0.3px">A</span><span style="letter-spacing:0.4px">rk</span></div>
<div class="cell" style="left:344px"><span style="letter-spacing:0.4px">test</span></div>
<div class="cell" style="left:602px"><span style="letter-spacing:1.5px">07</span><span style="letter-spacing:-0.4px">.</span><span style="letter-spacing:1.5px">10</span><span style="letter-spacing:-0.4px">.</span><span style="letter-spacing:1.5px">2024</span><span style="letter-spacing:0.3px"> / </span><span style="letter-spacing:1.5px">08</span><span style="letter-spacing:-0.4px">...</span></div>
<div class="cell" style="left:752px"><span style="letter-spacing:0.4px">aarshavin</span><span style="letter-spacing:-0.4px">@</span><span style="letter-spacing:0.3px">LCM</span><span style="letter-spacing:-0.4px">....</span></div>
<div class="badge st-ok">Применяется</div>
</div>
<div class="row" style="top:834px">
<div class="ln"></div>
<svg class="ricon" width="17" height="18" viewBox="0 0 17 18"><rect x="1.7" y="1.65" width="11.8" height="14.6" rx="2.2" fill="none" stroke="#8d929b" stroke-width="1.25"/><path d="M14.1 5.4h1.3M14.1 12.4h1.3" stroke="#8d929b" stroke-width="1"/><path d="M4.3 6l1 1 1.7-1.9M8.2 6.4h2.6M8.2 11.5h2.6" fill="none" stroke="#757a83" stroke-width="1.05"/><rect x="4.4" y="10.3" width="2.2" height="2.2" fill="none" stroke="#757a83" stroke-width="1.1"/></svg>
<div class="cell" style="left:44px"><span style="letter-spacing:0.3px">T</span><span style="letter-spacing:0.4px">est</span><span style="letter-spacing:-0.4px"><span style="position:relative;top:-2px">_</span></span><span style="letter-spacing:1.5px">976508</span><span style="letter-spacing:0.3px"> </span><span style="letter-spacing:0.7px">ко</span><span style="letter-spacing:-0.4px">...</span></div>
<div class="cell" style="left:194px"><span style="letter-spacing:0.3px">A</span><span style="letter-spacing:0.4px">rk</span></div>
<div class="cell" style="left:344px"><span style="letter-spacing:0.4px">test</span></div>
<div class="cell" style="left:602px"><span style="letter-spacing:1.5px">07</span><span style="letter-spacing:-0.4px">.</span><span style="letter-spacing:1.5px">10</span><span style="letter-spacing:-0.4px">.</span><span style="letter-spacing:1.5px">2024</span><span style="letter-spacing:0.3px"> / </span><span style="letter-spacing:1.5px">08</span><span style="letter-spacing:-0.4px">...</span></div>
<div class="cell" style="left:752px"><span style="letter-spacing:0.4px">aarshavin</span><span style="letter-spacing:-0.4px">@</span><span style="letter-spacing:0.3px">LCM</span><span style="letter-spacing:-0.4px">....</span></div>
<div class="badge st-ok">Применяется</div>
</div>
<div class="row" style="top:875px">
<div class="ln"></div>
<svg class="ricon" width="17" height="18" viewBox="0 0 17 18"><rect x="1.7" y="1.65" width="11.8" height="14.6" rx="2.2" fill="none" stroke="#8d929b" stroke-width="1.25"/><path d="M14.1 5.4h1.3M14.1 12.4h1.3" stroke="#8d929b" stroke-width="1"/><path d="M4.3 6l1 1 1.7-1.9M8.2 6.4h2.6M8.2 11.5h2.6" fill="none" stroke="#757a83" stroke-width="1.05"/><rect x="4.4" y="10.3" width="2.2" height="2.2" fill="none" stroke="#757a83" stroke-width="1.1"/></svg>
<div class="cell" style="left:44px"><span style="letter-spacing:0.3px">T</span><span style="letter-spacing:0.4px">est</span><span style="letter-spacing:-0.4px"><span style="position:relative;top:-2px">_</span></span><span style="letter-spacing:1.5px">976508</span></div>
<div class="cell" style="left:194px"><span style="letter-spacing:0.3px">A</span><span style="letter-spacing:0.4px">rk</span></div>
<div class="cell" style="left:344px"><span style="letter-spacing:1.5px">22</span><span style="letter-spacing:-0.4px">.</span><span style="letter-spacing:1.5px">12</span><span style="letter-spacing:-0.4px">.</span><span style="letter-spacing:1.5px">3</span></div>
<div class="cell" style="left:602px"><span style="letter-spacing:1.5px">07</span><span style="letter-spacing:-0.4px">.</span><span style="letter-spacing:1.5px">10</span><span style="letter-spacing:-0.4px">.</span><span style="letter-spacing:1.5px">2024</span><span style="letter-spacing:0.3px"> / </span><span style="letter-spacing:1.5px">08</span><span style="letter-spacing:-0.4px">...</span></div>
<div class="cell" style="left:752px"><span style="letter-spacing:0.4px">aarshavin</span><span style="letter-spacing:-0.4px">@</span><span style="letter-spacing:0.3px">LCM</span><span style="letter-spacing:-0.4px">....</span></div>
<div class="badge st-ok">Применяется</div>
</div>
<div class="row" style="top:916px">
<div class="ln"></div>
<svg class="ricon" width="17" height="18" viewBox="0 0 17 18"><rect x="1.7" y="1.65" width="11.8" height="14.6" rx="2.2" fill="none" stroke="#8d929b" stroke-width="1.25"/><path d="M14.1 5.4h1.3M14.1 12.4h1.3" stroke="#8d929b" stroke-width="1"/><path d="M4.3 6l1 1 1.7-1.9M8.2 6.4h2.6M8.2 11.5h2.6" fill="none" stroke="#757a83" stroke-width="1.05"/><rect x="4.4" y="10.3" width="2.2" height="2.2" fill="none" stroke="#757a83" stroke-width="1.1"/></svg>
<div class="cell" style="left:44px"><span style="letter-spacing:0.3px">T</span><span style="letter-spacing:0.4px">est</span><span style="letter-spacing:-0.4px"><span style="position:relative;top:-2px">_</span></span><span style="letter-spacing:1.5px">336983</span></div>
<div class="cell" style="left:194px"><span style="letter-spacing:0.3px">A</span><span style="letter-spacing:0.4px">rk</span></div>
<div class="cell" style="left:344px"><span style="letter-spacing:1.5px">22</span><span style="letter-spacing:-0.4px">.</span><span style="letter-spacing:1.5px">12</span><span style="letter-spacing:-0.4px">.</span><span style="letter-spacing:1.5px">3</span></div>
<div class="cell" style="left:602px"><span style="letter-spacing:1.5px">07</span><span style="letter-spacing:-0.4px">.</span><span style="letter-spacing:1.5px">10</span><span style="letter-spacing:-0.4px">.</span><span style="letter-spacing:1.5px">2024</span><span style="letter-spacing:0.3px"> / </span><span style="letter-spacing:1.5px">08</span><span style="letter-spacing:-0.4px">...</span></div>
<div class="cell" style="left:752px"><span style="letter-spacing:0.4px">aarshavin</span><span style="letter-spacing:-0.4px">@</span><span style="letter-spacing:0.3px">LCM</span><span style="letter-spacing:-0.4px">....</span></div>
<div class="badge st-ok">Применяется</div>
</div>
<div class="abs scroll"></div>
<div class="abs divider"></div>
<div class="abs rp-title">Test<span style="position:relative;top:-2px">_</span>380747</div>
<div class="abs rp-badge">Остановлено</div>
<div class="abs lbl" style="top:76px"><span style="letter-spacing:0.45px">Тип</span></div>
<div class="abs val" style="top:96px"><span style="letter-spacing:0.5px">Программное</span> <span style="letter-spacing:0.5px">обеспечение</span></div>
<div class="abs lbl" style="top:132px"><span style="letter-spacing:0.45px">Конфигурация</span></div>
<div class="abs val" style="top:152px">Ark1</div>
<div class="abs lbl" style="top:188px"><span style="letter-spacing:0.45px">Версия</span> <span style="letter-spacing:0.45px">конфигурации</span></div>
<div class="abs val" style="top:208px">22.12.3.xx</div>
<div class="abs lbl" style="top:244px"><span style="letter-spacing:0.45px">Расписание</span></div>
<div class="abs val" style="top:264px"><span style="letter-spacing:0.5px">Стандартное</span></div>
<div class="abs lbl" style="top:300px"><span style="letter-spacing:0.45px">Дата</span> <span style="letter-spacing:0.45px">создания</span></div>
<div class="abs val" style="top:320px">27.11.2024 / 11:15:52</div>
<div class="abs lbl" style="top:356px"><span style="letter-spacing:0.45px">Дата</span> <span style="letter-spacing:0.45px">последнего</span> <span style="letter-spacing:0.45px">изменения</span></div>
<div class="abs val" style="top:376px">04.12.2024 / 13:14:54</div>
<div class="abs lbl" style="top:412px"><span style="letter-spacing:0.45px">Автор</span></div>
<div class="abs val" style="top:432px">aarshavin@LCM.TERRA.INNO.TECH</div>
<div class="abs" style="left:1231px;top:476px;font-size:14px;font-weight:700;line-height:20px;color:#1b1c20">Результат</div>
<div class="abs card"></div>
<div class="abs green"></div>
<div class="abs gtext"><span style="letter-spacing:0.4px">Успешное</span> <span style="letter-spacing:0.4px">применение</span>. <span style="letter-spacing:0.4px">Процент</span><br><span style="letter-spacing:0.5px">ошибок</span> <span style="letter-spacing:0.5px">не</span> <span style="letter-spacing:0.5px">превышает</span> <span style="letter-spacing:0.5px">допустимое</span><br><span style="letter-spacing:0.3px">значение</span> — 30%.</div>
<svg class="abs" style="left:1502px;top:528px" width="16" height="16" viewBox="0 0 16 16"><circle cx="8" cy="8" r="6.6" fill="none" stroke="#2a9a4a" stroke-width="1.2"/><path d="M5.3 8.2l1.9 1.9 3.6-3.7" fill="none" stroke="#2a9a4a" stroke-width="1.2"/></svg>
<div class="abs dot" style="left:1244px;top:611px;background:#7fd49a"></div>
<div class="abs leg" style="top:605px"><span style="letter-spacing:0.5px">Установлено</span></div>
<div class="abs num" style="left:1439px;width:48px;top:605px">0</div>
<div class="abs pill" style="top:605px">0%</div>
<div class="abs dot" style="left:1244px;top:637px;background:#0c5a1c"></div>
<div class="abs leg" style="top:631px"><span style="letter-spacing:0.5px">Планируется</span></div>
<div class="abs num" style="left:1439px;width:48px;top:631px">0</div>
<div class="abs pill" style="top:631px">0%</div>
<div class="abs dot" style="left:1244px;top:663px;background:#fbd977"></div>
<div class="abs leg" style="top:657px"><span style="letter-spacing:0.5px">Ожидает</span> <span style="letter-spacing:0.5px">установки</span></div>
<div class="abs num" style="left:1439px;width:48px;top:657px">10</div>
<div class="abs pill" style="top:657px">100%</div>
<div class="abs dot" style="left:1244px;top:689px;background:#f7a9ab"></div>
<div class="abs leg" style="top:683px"><span style="letter-spacing:0.5px">Ошибка</span></div>
<div class="abs num" style="left:1439px;width:48px;top:683px">0</div>
<div class="abs pill" style="top:683px">0%</div>
<div class="abs" style="left:1244px;top:715px;width:288px;height:1px;background:#dcdee2"></div>
<div class="abs dot" style="left:1244px;top:734px;background:#a9c8fb"></div>
<div class="abs leg" style="top:728px"><span style="letter-spacing:0.58px">Всего</span> <span style="letter-spacing:0.58px">устройств</span></div>
<div class="abs num" style="left:1480px;width:52px;top:728px">10</div>
<svg class="abs" style="left:1225px;top:785px" width="40" height="160" viewBox="0 0 40 160"><g fill="none" stroke="#0d63fb" stroke-linecap="round" stroke-linejoin="round"><path d="M9.6 16H20.9M15.4 11.1L20.9 16L15.4 20.6" stroke-width="1.3"/><circle cx="16" cy="48" r="7.1" stroke-width="1.2"/><path d="M14.6 45.5V50.5L18.6 48Z" stroke-width="1.2"/><path d="M18 76.6V88M12.5 83.1L18 88.3L22.8 83.1M10.5 91.4H25.6" stroke-width="1.5"/><path d="M9.1 138.4H22.9M10.5 138.4L11.6 148.6Q11.8 150.3 13.5 150.3H18.6Q20.3 150.3 20.5 148.6L21.5 138.4M14.4 141.2V147.6M17.6 141.2V147.6" stroke-width="1.3"/></g><rect x="15.1" y="136" width="1.8" height="2.4" fill="#0d63fb"/></svg>
<div class="abs act" style="left:1259px;top:791px"><span style="letter-spacing:0.75px">Открыть</span></div>
<div class="abs act" style="left:1259px;top:823px"><span style="letter-spacing:0.42px">Возобновить</span><span style="letter-spacing:0.42px"> </span><span style="letter-spacing:0.42px">применение</span></div>
<div class="abs redbox"></div>
<div class="abs act" style="left:1263px;top:859px;font-size:16px;line-height:22px;letter-spacing:0.5px">Скачать подробный результат</div>
<div class="abs act" style="left:1259px;top:919px"><span style="letter-spacing:0.5px">Удалить</span></div>
<svg class="abs" style="left:672px;top:674px" width="12" height="20" viewBox="0 0 12 20"><path d="M2.5 2.5H4.5Q5.5 2.5 5.5 3.5V16.5Q5.5 17.5 4.5 17.5H2.5M8.5 2.5H6.5Q5.5 2.5 5.5 3.5M5.5 16.5Q5.5 17.5 6.5 17.5H8.5" fill="none" stroke="#dfe1e4" stroke-width="0.9"/></svg>
</body></html>
